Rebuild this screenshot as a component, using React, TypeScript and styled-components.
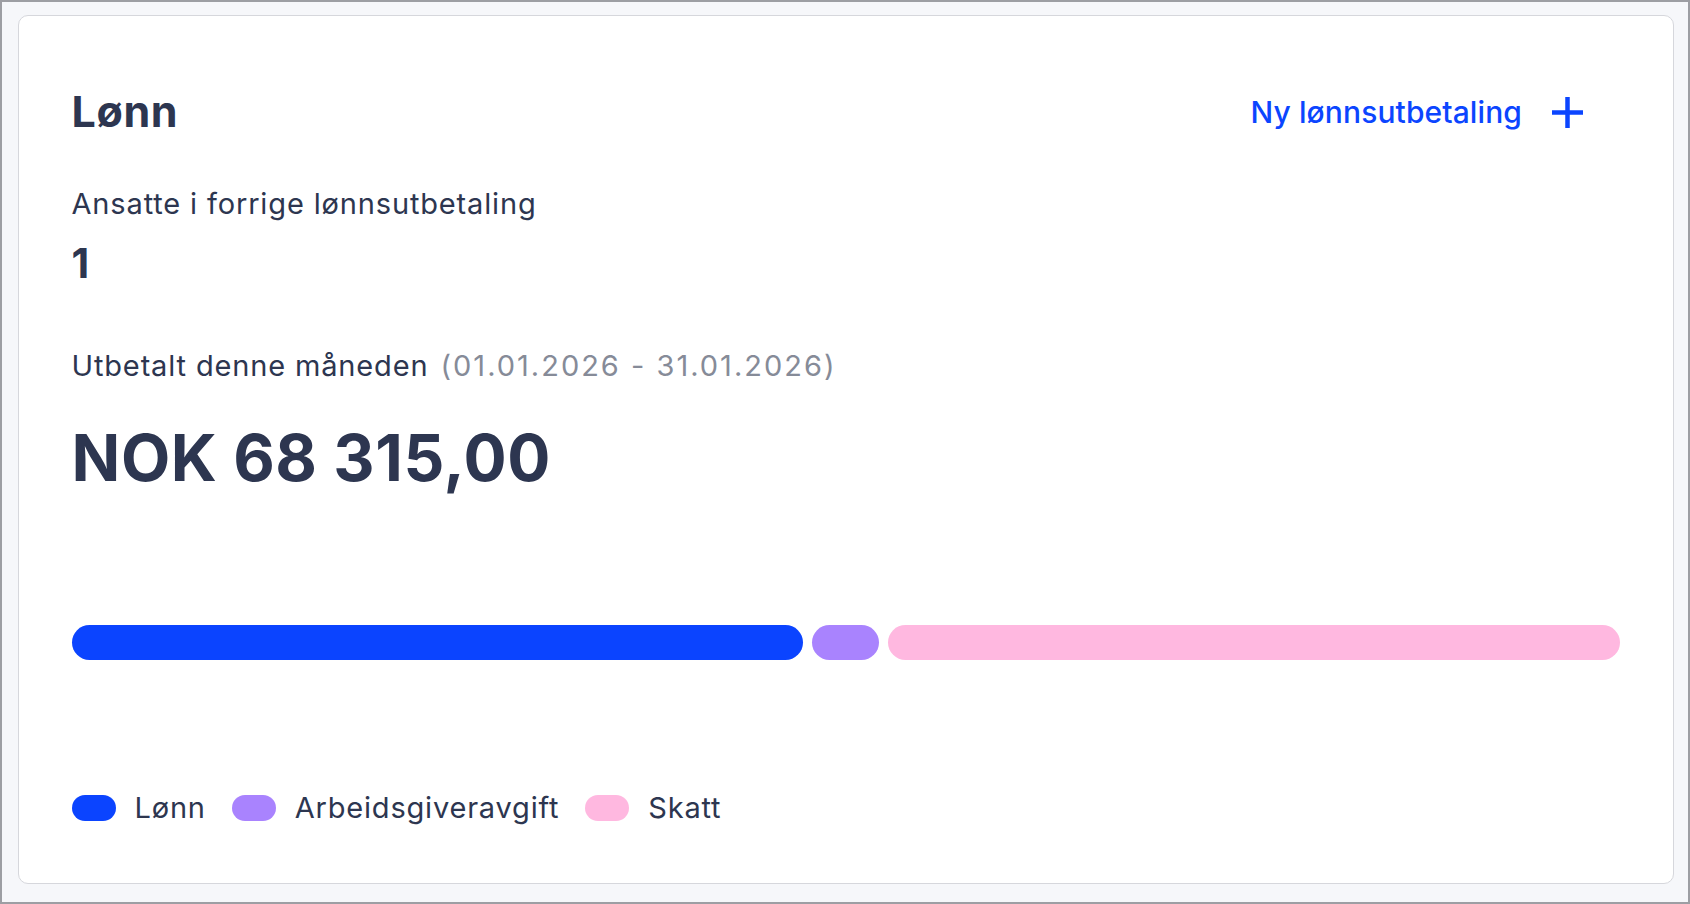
import React from "react";
import styled, { createGlobalStyle } from "styled-components";

const GlobalStyle = createGlobalStyle`
  html, body { margin: 0; padding: 0; }
  body {
    font-family: Inter, "Noto Sans", "Liberation Sans", sans-serif;
    color: #2d3650;
    -webkit-font-smoothing: antialiased;
  }
  * { box-sizing: border-box; }
`;

const Frame = styled.div`
  height: 100vh;
  border: 2px solid #9d9ea3;
  background: #f6f7fa;
  padding: 13px 14px 18px 16px;
  display: flex;
  flex-direction: column;
`;

const Card = styled.section`
  flex: 1;
  background: #ffffff;
  border: 1.5px solid #d6d7dc;
  border-radius: 10px;
  padding: 70px 53px 0 52.5px;
  display: flex;
  flex-direction: column;
`;

const Header = styled.header`
  display: flex;
  align-items: center;
  justify-content: space-between;
  height: 50px;
`;

const Title = styled.h2`
  margin: 0;
  font-size: 43px;
  line-height: 50px;
  font-weight: 700;
  letter-spacing: 0.6px;
  color: #2d3650;
`;

const AddButton = styled.button`
  display: flex;
  align-items: center;
  gap: 30px;
  border: none;
  background: transparent;
  padding: 0 37px 0 0;
  margin-top: 2px;
  font-family: inherit;
  font-size: 30px;
  line-height: 40px;
  font-weight: 500;
  letter-spacing: 0.1px;
  color: #0b45ff;
  cursor: pointer;
`;

const Label = styled.div<{ $top: number }>`
  margin-top: ${(p) => p.$top}px;
  font-size: 29px;
  line-height: 36px;
  font-weight: 400;
  letter-spacing: 0.85px;
  color: #2d3650;
`;

const Muted = styled.span`
  color: #868b98;
  margin-left: 12px;
  letter-spacing: 2px;
`;

const Count = styled.div`
  margin-top: 17px;
  font-size: 41px;
  line-height: 48px;
  font-weight: 700;
  color: #2d3650;
  letter-spacing: 8px;
`;

const Amount = styled.div`
  margin-top: 36px;
  font-size: 64px;
  line-height: 76px;
  font-weight: 700;
  color: #2d3650;
  letter-spacing: 0.6px;
`;

const Bar = styled.div`
  margin-top: 129px;
  display: flex;
  gap: 9px;
  height: 35px;
`;

const Segment = styled.div<{ $grow: number; $color: string }>`
  flex: ${(p) => p.$grow} 1 0;
  background: ${(p) => p.$color};
  border-radius: 18px;
`;

const Legend = styled.div`
  margin-top: 130px;
  display: flex;
  align-items: center;
  gap: 26px;
`;

const LegendItem = styled.div`
  display: flex;
  align-items: center;
  gap: 19px;
  font-size: 29px;
  line-height: 36px;
  letter-spacing: 0.8px;
  color: #2d3650;
`;

const Swatch = styled.span<{ $color: string }>`
  display: block;
  width: 44px;
  height: 26px;
  border-radius: 13px;
  background: ${(p) => p.$color};
`;

const PlusIcon = () => (
  <svg width="31" height="31" viewBox="0 0 31 31" aria-hidden="true">
    <path d="M15.5 0 V31 M0 15.5 H31" stroke="#0b45ff" strokeWidth="4.5" fill="none" />
  </svg>
);

const segments = [
  { name: "Lønn", value: 731, color: "#0b44ff" },
  { name: "Arbeidsgiveravgift", value: 67, color: "#a983fe" },
  { name: "Skatt", value: 731, color: "#ffb8e0" },
];

export default function App() {
  return (
    <>
      <GlobalStyle />
      <Frame>
        <Card>
          <Header>
            <Title>Lønn</Title>
            <AddButton type="button">
              Ny lønnsutbetaling
              <PlusIcon />
            </AddButton>
          </Header>
          <Label $top={50}>Ansatte i forrige lønnsutbetaling</Label>
          <Count>1</Count>
          <Label $top={61}>
            Utbetalt denne måneden<Muted>(01.01.2026 - 31.01.2026)</Muted>
          </Label>
          <Amount>NOK 68 315,00</Amount>
          <Bar>
            {segments.map((s) => (
              <Segment key={s.name} $grow={s.value} $color={s.color} />
            ))}
          </Bar>
          <Legend>
            {segments.map((s) => (
              <LegendItem key={s.name}>
                <Swatch $color={s.color} />
                {s.name}
              </LegendItem>
            ))}
          </Legend>
        </Card>
      </Frame>
    </>
  );
}
